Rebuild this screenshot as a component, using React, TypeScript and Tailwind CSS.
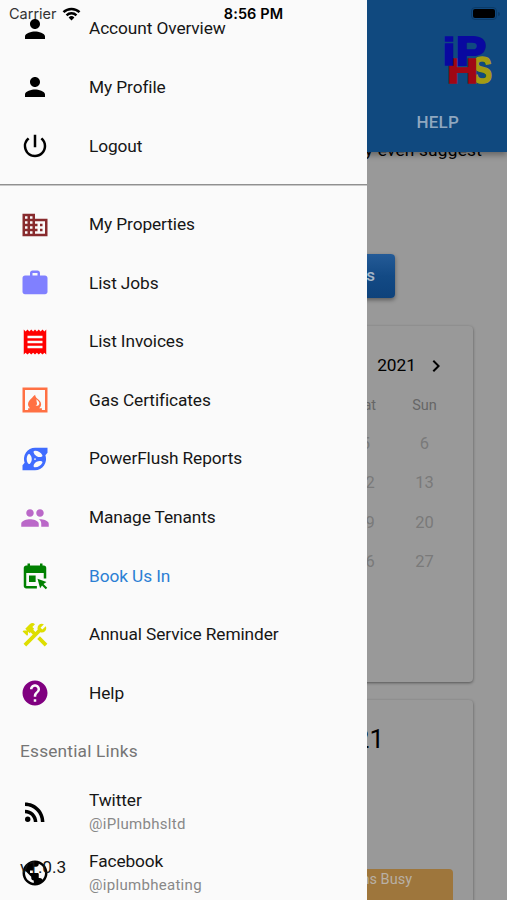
import React from 'react';
import type { IconType } from 'react-icons';
import {
  MdBusiness,
  MdChevronRight,
  MdConstruction,
  MdHelp,
  MdPeople,
  MdPerson,
  MdPowerSettingsNew,
  MdPublic,
  MdReceipt,
  MdRssFeed,
  MdWork,
} from 'react-icons/md';

interface MenuItem {
  label: string;
  icon: IconType | React.FC;
  color: string;
  active?: boolean;
}

interface LinkItem {
  label: string;
  handle: string;
  icon: IconType;
}

const PumpIcon: React.FC = () => (
  <svg viewBox="0 0 24 24" width="1em" height="1em" fill="currentColor">
    <path d="M12 3h10v4l-1.700 2a9 9 0 0 1-8.300 12H2v-4l1.700-2A9 9 0 0 1 12 3z" />
    <g fill="#fafafa">
      {[0, 120, 240].map((angle) => (
        <path
          key={angle}
          transform={`rotate(${angle} 12 12)`}
          d="M9.400 12c0-1.600-.6-2.800-1.500-3.700-.5-.4-1.200-.3-1.600.3-1.300 2-1.300 4.800 0 6.800.4.600 1.100.7 1.600.3.900-.9 1.500-2.100 1.500-3.700z"
        />
      ))}
      <circle cx="12" cy="12" r="0.7" />
    </g>
  </svg>
);

const FireplaceIcon: React.FC = () => (
  <svg viewBox="0 0 24 24" width="1em" height="1em" fill="currentColor">
    <path fillRule="evenodd" d="M2 2h20v20H2zM4 4v16h2.500v-1.500h1.500c-1-.8-1.600-2-1.600-3.300 0-2.500 1.700-3.300 3.100-4.900.8-.9 1.500-1.600 2.600-2.500.1 1.300.7 2.200 1.600 3 1.600 1.200 3.200 2.500 3.200 4.600 0 1.200-.6 2.300-1.500 3.100h2.100V20H20V4zM13.200 11.300c-.2 1.700.4 2.500.4 3.400s-.5 1.500-1.300 1.800c1.700.6 3.200-.3 3.200-1.900 0-1.300-1.200-2.200-2.300-3.300z" />
  </svg>
);

const CalendarCursorIcon: React.FC = () => (
  <svg viewBox="0 0 24 24" width="1em" height="1em" fill="currentColor">
    <path d="M19 3.500h-1V2h-2v1.500H8V2H6v1.500H5c-1.100 0-2 .9-2 2V20c0 1.100.9 2 2 2h8.500v-2H5V9.500h14V14h2V5.500a2 2 0 0 0-2-2zM7.200 11.500h5.300v5.300H7.200zM14 14.100l7.200 2.700-2.400 1.500 3 3-1.200 1.200-3-3-1.500 2.200z" />
  </svg>
);

const WifiIcon: React.FC = () => (
  <svg viewBox="0 0 20 15" className="ml-[5px] h-[14px] w-[19px]" fill="none" stroke="black" strokeWidth="2.6">
    <path d="M1.400 5.600a12.200 12.200 0 0 1 17.200 0" />
    <path d="M4.700 8.900a7.500 7.500 0 0 1 10.600 0" />
    <path d="M10 14.400 6.900 11.200a4.400 4.400 0 0 1 6.200 0z" fill="black" stroke="none" />
  </svg>
);

const Logo: React.FC = () => (
  <svg viewBox="0 0 54 56" className="h-[56px] w-[54px] overflow-visible" fontFamily="Liberation Sans" fontWeight="bold" strokeWidth="1.6">
    <text x="30" y="52" fontSize="37" fill="#a39c12" stroke="#a39c12" textLength="20" lengthAdjust="spacingAndGlyphs">S</text>
    <text x="5" y="51.500" fontSize="35" fill="#a00714" stroke="#a00714" textLength="31" lengthAdjust="spacingAndGlyphs">H</text>
    <text x="0.5" y="34" fontSize="39" fill="#0908a0" stroke="#0908a0" textLength="13" lengthAdjust="spacingAndGlyphs">i</text>
    <text x="14" y="34" fontSize="40" fill="#0908a0" stroke="#0908a0" strokeWidth="2.200" textLength="30" lengthAdjust="spacingAndGlyphs">P</text>
  </svg>
);

const accountItems: MenuItem[] = [
  { label: 'Account Overview', icon: MdPerson, color: 'text-black' },
  { label: 'My Profile', icon: MdPerson, color: 'text-black' },
  { label: 'Logout', icon: MdPowerSettingsNew, color: 'text-black' },
];

const menuItems: MenuItem[] = [
  { label: 'My Properties', icon: MdBusiness, color: 'text-[#882b2d]' },
  { label: 'List Jobs', icon: MdWork, color: 'text-[#8080ff]' },
  { label: 'List Invoices', icon: MdReceipt, color: 'text-[#ff0000]' },
  { label: 'Gas Certificates', icon: FireplaceIcon, color: 'text-[#ff7043]' },
  { label: 'PowerFlush Reports', icon: PumpIcon, color: 'text-[#3f6cff]' },
  { label: 'Manage Tenants', icon: MdPeople, color: 'text-[#ba68c8]' },
  { label: 'Book Us In', icon: CalendarCursorIcon, color: 'text-[#008000]', active: true },
  { label: 'Annual Service Reminder', icon: MdConstruction, color: 'text-[#dede00]' },
  { label: 'Help', icon: MdHelp, color: 'text-[#800080]' },
];

const linkItems: LinkItem[] = [
  { label: 'Twitter', handle: '@iPlumbhsltd', icon: MdRssFeed },
  { label: 'Facebook', handle: '@iplumbheating', icon: MdPublic },
];

const weeks = [
  ['5', '6'],
  ['12', '13'],
  ['19', '20'],
  ['26', '27'],
];

const MenuRow: React.FC<MenuItem> = ({ label, icon: Icon, color, active }) => (
  <li className="flex h-[58.6px] items-center pl-5">
    <span className={`w-[69px] pb-px text-[30px] ${color}`}>
      <Icon />
    </span>
    <span className={`text-[17.3px] tracking-[-0.1px] ${active ? 'text-[#2b7fd4]' : 'text-[#161616]'}`}>{label}</span>
  </li>
);

const Drawer: React.FC = () => (
  <nav className="absolute inset-y-0 left-0 w-[367px] overflow-hidden bg-[#fafafa]">
    <ul>
      {accountItems.map((item) => (
        <MenuRow key={item.label} {...item} />
      ))}
    </ul>
    <hr className="mt-[8px] mb-[10px] h-[2px] border-t border-b border-t-[#909090] border-b-[#c8c8c8]" />
    <ul>
      {menuItems.map((item) => (
        <MenuRow key={item.label} {...item} />
      ))}
    </ul>
    <h2 className="flex h-[58px] items-center pl-5 text-[17.3px] tracking-[0.2px] text-[#757575]">Essential Links</h2>
    <ul>
      {linkItems.map(({ label, handle, icon: Icon }) => (
        <li key={label} className="flex h-[61px] items-center pl-5">
          <span className="w-[69px] text-[30px] text-black">
            <Icon />
          </span>
          <span>
            <span className="block text-[17.3px] leading-[25px] tracking-[-0.1px] text-[#161616]">{label}</span>
            <span className="block text-[15px] leading-[23px] tracking-[0.3px] text-[#888888]">{handle}</span>
          </span>
        </li>
      ))}
    </ul>
    <span className="absolute top-[855px] left-5 text-[17.3px] leading-[24px] tracking-[-0.1px] text-[#161616]">v1.0.3</span>
  </nav>
);

const BookingPage: React.FC = () => (
  <div className="flex h-full flex-col">
    <header className="relative z-10 flex h-[152px] shrink-0 flex-col items-end bg-[#10497f] shadow-[0_3px_6px_rgba(0,0,0,0.35)]">
      <div className="mt-[31px] mr-[11px]">
        <Logo />
      </div>
      <span className="mt-[23px] mr-[48px] text-[17px] leading-[24px] font-medium tracking-[0.2px] text-[#8fa7bf]">HELP</span>
    </header>
    <p className="-mt-[14px] pr-[25px] text-right text-[17.3px] leading-[24px] tracking-[0.2px] text-black">may even suggest</p>
    <div className="mt-[92px] flex h-[44px] w-[395px] shrink-0 items-center justify-end rounded bg-linear-to-b from-[#245b97] via-[#134a85] to-[#0e427b] pr-[20px] text-[17px] font-medium text-[#a6b6c6] shadow-[0_2px_4px_rgba(0,0,0,0.4)]">
      Bookings
    </div>
    <section className="mt-[28px] h-[356px] w-[473px] shrink-0 rounded bg-[#999999] shadow-[0_1px_3px_rgba(0,0,0,0.45)]">
      <div className="flex items-center justify-end pt-[27px] pr-[25px] text-[17.3px] leading-[25px] text-black">
        <span className="mr-[16px]">June</span>
        <span>2021</span>
        <MdChevronRight className="ml-[8px] text-[24px]" />
      </div>
      <div className="mt-[18px] flex justify-end pr-[19px] text-[14.500px] leading-[20px] text-[#666666]">
        <span className="w-[59px] text-center">Sat</span>
        <span className="w-[59px] text-center">Sun</span>
      </div>
      <div className="mt-[9px]">
        {weeks.map((week) => (
          <div key={week[1]} className="flex h-[39.2px] items-center justify-end pr-[19px] text-[16.500px] text-[#7a7a7a]">
            {week.map((day) => (
              <span key={day} className="w-[59px] text-center">{day}</span>
            ))}
          </div>
        ))}
      </div>
    </section>
    <section className="mt-[18px] h-[240px] w-[473px] shrink-0 rounded bg-[#999999] shadow-[0_1px_3px_rgba(0,0,0,0.45)]">
      <h3 className="pt-[21px] pr-[89px] text-right text-[26px] leading-[36px] text-black">June 2021</h3>
      <div className="mt-[112px] h-[60px] w-[453px] rounded bg-[#9e763c] pr-[41px] text-right text-[14.500px] leading-[21px] text-[#b8b0a5]">
        iPlumbhs Busy
      </div>
    </section>
  </div>
);

const StatusBar: React.FC = () => (
  <div className="absolute inset-x-0 top-0 z-20 grid h-[27px] grid-cols-3 items-center font-[Inter]">
    <div className="flex items-center pl-[9px] text-[14.500px] text-[#333333]">
      Carrier
      <WifiIcon />
    </div>
    <span className="text-center text-[14.500px] font-semibold tracking-[0.1px] text-black">8:56 PM</span>
    <div className="flex items-center justify-end pr-[7px]">
      <span className="rounded-[4px] border border-[#0b3b68] p-px">
        <span className="block h-[9px] w-[22px] rounded-[2px] bg-black" />
      </span>
      <span className="ml-px h-[4px] w-[2px] rounded-r bg-[#0b3b68]" />
    </div>
  </div>
);

export default function App() {
  return (
    <div className="relative h-[900px] w-[507px] overflow-hidden bg-[#999999] font-[Roboto]">
      <BookingPage />
      <div className="absolute inset-0 z-10">
        <Drawer />
      </div>
      <StatusBar />
    </div>
  );
}
